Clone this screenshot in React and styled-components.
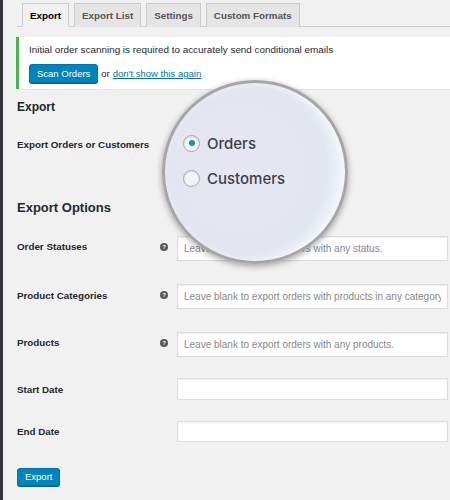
import React from "react";
import styled, { createGlobalStyle } from "styled-components";

const Global = createGlobalStyle`
  html, body { margin: 0; padding: 0; background: #f1f1f1; }
  body { font-family: "Liberation Sans", Arial, sans-serif; color: #23282d; }
  * { box-sizing: border-box; }
`;

const Page = styled.div`
  position: relative;
  width: 450px;
  height: 500px;
  overflow: hidden;
  border-left: 3px solid #34383c;
  background: #f1f1f1;
`;

const TabBar = styled.div`
  display: flex;
  gap: 5px;
  margin-left: 14px;
  padding: 3px 0 0 5px;
  border-bottom: 1px solid #ccc;
  height: 27px;
`;

const Tab = styled.div`
  height: 24px;
  padding: 0 7px;
  display: flex;
  align-items: center;
  font-size: 9.8px;
  font-weight: 700;
  border: 1px solid #ccc;
  border-bottom: none;
  margin-bottom: -1px;
  background: ${(p) => (p.$active ? "#f1f1f1" : "#e5e5e5")};
  color: ${(p) => (p.$active ? "#000" : "#555")};
  ${(p) => p.$active && "border-bottom: 1px solid #f1f1f1;"}
`;

const Notice = styled.div`
  margin: 10px 0 0 13px;
  background: #fff;
  border-left: 3px solid #46b450;
  height: 52px;
  padding: 7px 0 0 10px;
  box-shadow: 0 1px 1px rgba(0, 0, 0, 0.04);
`;

const NoticeText = styled.div`
  font-size: 9.9px;
  color: #23282d;
  line-height: 11px;
`;

const NoticeActions = styled.div`
  display: flex;
  align-items: center;
  gap: 3px;
  margin-top: 9px;
  font-size: 9.5px;
  color: #23282d;
`;

const Button = styled.button`
  font-family: inherit;
  font-size: ${(p) => p.$fs || 9.5}px;
  height: ${(p) => p.$h || 19}px;
  padding: 0 ${(p) => p.$pad || 7}px;
  background: #0085ba;
  border: 1px solid #0073aa;
  border-radius: 3px;
  color: #fff;
  box-shadow: 0 1px 0 #006799;
  cursor: pointer;
`;

const Link = styled.a`
  color: #0073aa;
  text-decoration: underline;
`;

const Content = styled.div`
  padding-left: 14px;
`;

const Heading = styled.h2`
  margin: 0;
  font-size: ${(p) => p.$size}px;
  font-weight: 700;
  color: #23282d;
  line-height: 16px;
  margin-top: ${(p) => p.$top}px;
`;

const FieldRow = styled.div`
  display: grid;
  grid-template-columns: 141px 19px 271px;
  align-items: ${(p) => (p.$top ? "start" : "center")};
  height: ${(p) => p.$h}px;
  padding-top: ${(p) => p.$pt || 0}px;
  margin-top: ${(p) => p.$mt || 0}px;
`;

const Label = styled.div`
  font-size: 9.8px;
  font-weight: 700;
  color: #23282d;
  margin-top: ${(p) => p.$lift || 0}px;
`;

const Help = styled.span`
  width: 8px;
  height: 8px;
  margin-left: 2px;
  border-radius: 50%;
  background: #555;
  color: #fff;
  font-size: 6px;
  font-weight: 700;
  display: flex;
  align-items: center;
  justify-content: center;
  line-height: 1;
  margin-top: -3px;
`;

const Input = styled.input`
  width: 271px;
  height: ${(p) => p.$h}px;
  border: 1px solid #ddd;
  box-shadow: inset 0 1px 2px rgba(0, 0, 0, 0.07);
  background: #fff;
  font-family: inherit;
  font-size: 10px;
  padding: 0 6px;
  color: #32373c;
  outline: none;
  &::placeholder { color: #888; }
`;

const SmallRadios = styled.div`
  display: flex;
  flex-direction: column;
  gap: 6px;
  font-size: 9.5px;
`;

const Magnifier = styled.div`
  position: absolute;
  left: 159px;
  top: 80px;
  width: 186px;
  height: 184px;
  border-radius: 50%;
  border: 3px solid #a6a6a8;
  background: radial-gradient(circle at 42% 48%, #e5e7f1 0%, #e3e6f0 62%, #eef2f9 72%, #d9e3f1 86%, #c9d7ec 100%);
  box-shadow: 0 2px 6px rgba(0, 0, 0, 0.35), inset -2px 0 6px rgba(255, 255, 255, 0.6);
  padding: 51px 0 0 18px;
  display: flex;
  flex-direction: column;
  gap: 17px;
`;

const BigOption = styled.div`
  display: flex;
  align-items: center;
  gap: 7px;
  font-family: Inter, "Liberation Sans", sans-serif;
  font-size: 15px;
  font-weight: 500;
  color: #3d3e4a;
  height: 18px;
`;

const BigRadio = styled.span`
  width: 17px;
  height: 17px;
  border-radius: 50%;
  border: 1.5px solid #a4a7b2;
  background: #f3f4f8;
  box-shadow: inset 0 1px 2px rgba(0, 0, 0, 0.1);
  display: flex;
  align-items: center;
  justify-content: center;
  &::after {
    content: "";
    width: 6px;
    height: 6px;
    border-radius: 50%;
    background: ${(p) => (p.$checked ? "#1e8cbe" : "transparent")};
  }
`;

export default function App() {
  return (
    <>
      <Global />
      <Page>
        <TabBar>
          <Tab $active>Export</Tab>
          <Tab>Export List</Tab>
          <Tab>Settings</Tab>
          <Tab>Custom Formats</Tab>
        </TabBar>
        <Notice>
          <NoticeText>Initial order scanning is required to accurately send conditional emails</NoticeText>
          <NoticeActions>
            <Button $pad={7}>Scan Orders</Button>
            <span>or</span>
            <Link href="#">don't show this again</Link>
          </NoticeActions>
        </Notice>
        <Content>
          <Heading $size={12} $top={10}>Export</Heading>
          <FieldRow $h={85} $top $pt={24}>
            <Label>Export Orders or Customers</Label>
            <span />
            <SmallRadios>
              <span>Orders</span>
              <span>Customers</span>
            </SmallRadios>
          </FieldRow>
          <Heading $size={13} $top={0}>Export Options</Heading>
          <FieldRow $h={48} $mt={8}>
            <Label $lift={-4}>Order Statuses</Label>
            <Help>?</Help>
            <Input $h={25} placeholder="Leave blank to export orders with any status." />
          </FieldRow>
          <FieldRow $h={48}>
            <Label $lift={-2}>Product Categories</Label>
            <Help>?</Help>
            <Input $h={25} placeholder="Leave blank to export orders with products in any category." />
          </FieldRow>
          <FieldRow $h={48}>
            <Label $lift={-3}>Products</Label>
            <Help>?</Help>
            <Input $h={25} placeholder="Leave blank to export orders with any products." />
          </FieldRow>
          <FieldRow $h={42}>
            <Label>Start Date</Label>
            <span />
            <Input $h={22} />
          </FieldRow>
          <FieldRow $h={42}>
            <Label>End Date</Label>
            <span />
            <Input $h={21} />
          </FieldRow>
          <div style={{ marginTop: 14 }}>
            <Button $pad={7} $h={18} $fs={9.5}>Export</Button>
          </div>
        </Content>
        <Magnifier>
          <BigOption>
            <BigRadio $checked />
            Orders
          </BigOption>
          <BigOption>
            <BigRadio />
            Customers
          </BigOption>
        </Magnifier>
      </Page>
    </>
  );
}
